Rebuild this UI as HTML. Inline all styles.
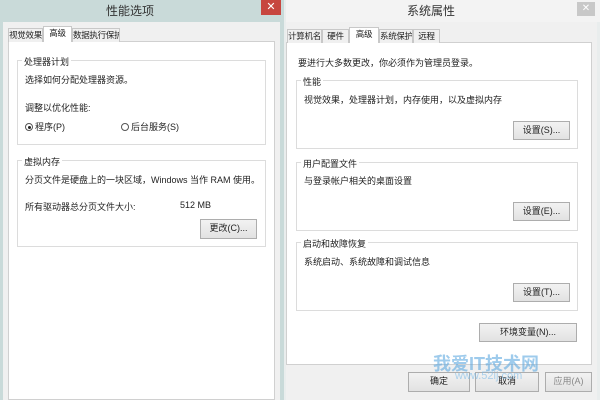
<!DOCTYPE html><html><head><meta charset="utf-8"><style>
*{margin:0;padding:0;box-sizing:border-box}
body{width:600px;height:400px;position:relative;overflow:hidden;background:#c8d8d7;font-family:"Liberation Sans","Noto Sans CJK SC",sans-serif;font-size:9px;color:#222}
.a{position:absolute}
.gb{position:absolute;border:1px solid #dcdcdc}
.gb .l{position:absolute;top:-6px;left:4px;background:#fff;padding:0 2px;font-size:9px}
.btn{position:absolute;background:linear-gradient(#f2f2f2,#e2e2e2);border:1px solid #adadad;text-align:center;font-size:9px;line-height:17px}
.tab{position:absolute;background:#f0f0f0;border:1px solid #c8c8c8;border-bottom:none;font-size:8.5px;line-height:13px;text-align:center;overflow:hidden;white-space:nowrap;letter-spacing:-0.3px}
.rd{display:inline-block;width:8px;height:8px;border:1px solid #555;border-radius:50%;vertical-align:-1px;margin-right:2px;position:relative}
</style></head><body>
<div class="a" style="left:0;top:0;width:284px;height:400px;background:#c9dad9"></div>
<div class="a" style="left:0;top:2px;width:260px;text-align:center;font-size:12px;color:#333">性能选项</div>
<div class="a" style="left:261px;top:0;width:20px;height:15px;background:#c7463f;color:#fff;text-align:center;font-size:11px;line-height:15px">✕</div>
<div class="a" style="left:3px;top:22px;width:277px;height:378px;background:#f0f0f0"></div>
<div class="a" style="left:8px;top:41px;width:267px;height:359px;background:#fff;border:1px solid #d0d0d0"></div>
<div class="tab" style="left:8px;top:28px;width:35px">视觉效果</div>
<div class="tab" style="left:43px;top:26px;background:#fff;height:16px;width:29px">高级</div>
<div class="tab" style="left:72px;top:28px;width:48px">数据执行保护</div>
<div class="gb" style="left:17px;top:60px;width:249px;height:85px"><span class="l">处理器计划</span></div>
<div class="a" style="left:25px;top:73px">选择如何分配处理器资源。</div>
<div class="a" style="left:25px;top:101px">调整以优化性能:</div>
<div class="a" style="left:25px;top:120px"><span class="rd"><span class="a" style="left:2px;top:2px;width:3px;height:3px;background:#222;border-radius:50%"></span></span>程序(P)</div>
<div class="a" style="left:121px;top:120px"><span class="rd"></span>后台服务(S)</div>
<div class="gb" style="left:17px;top:160px;width:249px;height:87px"><span class="l">虚拟内存</span></div>
<div class="a" style="left:25px;top:173px">分页文件是硬盘上的一块区域，Windows 当作 RAM 使用。</div>
<div class="a" style="left:25px;top:200px">所有驱动器总分页文件大小:</div>
<div class="a" style="left:180px;top:200px">512 MB</div>
<div class="btn" style="left:200px;top:219px;width:57px;height:20px">更改(C)...</div>
<div class="a" style="left:284px;top:0;width:316px;height:400px;background:#e9eded"></div>
<div class="a" style="left:286px;top:0;width:314px;height:22px;background:#f3f3f3"></div>
<div class="a" style="left:286px;top:2px;width:290px;text-align:center;font-size:12px;color:#333">系统属性</div>
<div class="a" style="left:577px;top:2px;width:18px;height:14px;background:#c8c8c8;color:#fff;text-align:center;font-size:10px;line-height:14px">✕</div>
<div class="a" style="left:286px;top:22px;width:311px;height:378px;background:#f0f0f0"></div>
<div class="a" style="left:286px;top:42px;width:306px;height:323px;background:#fff;border:1px solid #d0d0d0"></div>
<div class="tab" style="left:287px;top:29px;width:35px">计算机名</div>
<div class="tab" style="left:322px;top:29px;width:27px">硬件</div>
<div class="tab" style="left:349px;top:27px;background:#fff;height:16px;width:30px">高级</div>
<div class="tab" style="left:379px;top:29px;width:34px">系统保护</div>
<div class="tab" style="left:413px;top:29px;width:27px">远程</div>
<div class="a" style="left:298px;top:56px">要进行大多数更改，你必须作为管理员登录。</div>
<div class="gb" style="left:296px;top:80px;width:282px;height:69px"><span class="l">性能</span></div>
<div class="a" style="left:304px;top:93px">视觉效果，处理器计划，内存使用，以及虚拟内存</div>
<div class="btn" style="left:513px;top:121px;width:57px;height:19px">设置(S)...</div>
<div class="gb" style="left:296px;top:162px;width:282px;height:69px"><span class="l">用户配置文件</span></div>
<div class="a" style="left:304px;top:174px">与登录帐户相关的桌面设置</div>
<div class="btn" style="left:513px;top:202px;width:57px;height:19px">设置(E)...</div>
<div class="gb" style="left:296px;top:242px;width:282px;height:69px"><span class="l">启动和故障恢复</span></div>
<div class="a" style="left:304px;top:255px">系统启动、系统故障和调试信息</div>
<div class="btn" style="left:513px;top:283px;width:57px;height:19px">设置(T)...</div>
<div class="btn" style="left:479px;top:323px;width:98px;height:19px">环境变量(N)...</div>
<div class="btn" style="left:408px;top:372px;width:62px;height:20px">确定</div>
<div class="btn" style="left:475px;top:372px;width:64px;height:20px">取消</div>
<div class="btn" style="left:545px;top:372px;width:47px;height:20px;color:#888">应用(A)</div>
<div class="a" style="left:433px;top:350px;font-size:18px;font-weight:bold;color:#5fa9e0;opacity:.6">我爱IT技术网</div>
<div class="a" style="left:455px;top:370px;font-size:11px;color:#7bbbe8;opacity:.6">www.52ij.com</div>
</body></html>
